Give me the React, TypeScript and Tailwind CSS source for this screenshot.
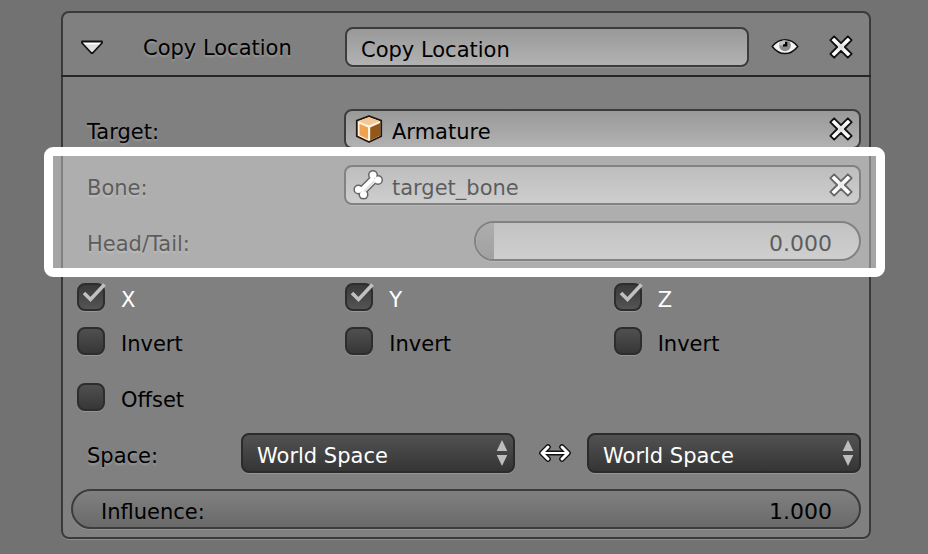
import { useId, useState, type ReactNode } from "react";

const engraved = "[text-shadow:0_2px_2px_rgb(255_255_255/0.2)]";

function CrossIcon() {
  return (
    <svg viewBox="0 0 24 24" className="size-6 overflow-visible" aria-hidden="true">
      <defs>
        <radialGradient id="cross-fill">
          <stop offset="0" stopColor="#dcdcdc" />
          <stop offset="0.6" stopColor="#ffffff" />
        </radialGradient>
      </defs>
      <path
        transform="rotate(45 12 12)"
        d="M9.300 -0.400H14.700V9.300H24.400V14.700H14.700V24.400H9.300V14.700H-0.400V9.300H9.300Z"
        fill="url(#cross-fill)"
        stroke="#101010"
        strokeWidth="1.800"
        strokeLinejoin="round"
      />
    </svg>
  );
}

function TriangleIcon() {
  return (
    <svg viewBox="0 0 24 16" className="h-4 w-6" aria-hidden="true">
      <defs>
        <linearGradient id="tri-fill" x1="0" y1="0" x2="0" y2="1">
          <stop offset="0.2" stopColor="#ffffff" />
          <stop offset="0.3" stopColor="#dcdcdc" />
          <stop offset="1" stopColor="#e8e8e8" />
        </linearGradient>
      </defs>
      <path d="M2 2.500H22V4L12.700 14H11.300L2 4Z" fill="url(#tri-fill)" stroke="#101010" strokeWidth="1.800" strokeLinejoin="round" />
    </svg>
  );
}

function EyeIcon() {
  return (
    <svg viewBox="0 0 28 18" className="h-[18px] w-7" aria-hidden="true">
      <path d="M1.200 8.500C5 3.800 9 1.800 14 1.800S23 3.800 26.800 8.500C23 13.300 19 15.600 14 15.600S5 13.300 1.200 8.500Z" fill="#f4f4f4" stroke="#101010" strokeWidth="1.500" strokeLinejoin="round" />
      <path d="M8.200 7.500C8.200 4.500 10 2.600 14 2.600S19.800 4.500 19.800 7.500A5.800 5.800 0 0 1 8.200 7.500Z" fill="#8c8c8c" />
      <path d="M8.200 7.500C8.200 4.500 10 2.600 14 2.600V7.500Z" fill="#c4c4c4" />
      <path d="M12 6.500L14 6V4H16.300V8.500H12Z" fill="#000" />
    </svg>
  );
}

function CubeIcon() {
  return (
    <svg viewBox="0 0 30 30" className="size-[30px]" aria-hidden="true">
      <path d="M15 2.200L27.200 6.600V22.300L15 28L2.800 22.300V6.600Z" fill="#fff3e2" stroke="#24170a" strokeWidth="1.800" strokeLinejoin="round" />
      <path d="M15 3.200L26 7.200L15 11.500L4 7.200Z" fill="#f5c795" />
      <path d="M5.500 9.700L14 13.400V25.300L5.500 21.300Z" fill="#efa350" />
      <path d="M16.200 13.400L26.200 9V21.600L16.200 26.400Z" fill="#94571a" />
    </svg>
  );
}

function BoneIcon() {
  return (
    <svg viewBox="1 0 30 30" className="size-[30px] overflow-visible" aria-hidden="true">
      <g fill="#101010" stroke="#101010">
        <path d="M9.500 20.500L20.500 9.500" strokeWidth="9.500" />
        <g stroke="none">
          <circle cx="20" cy="5" r="5" />
          <circle cx="25" cy="10" r="5" />
          <circle cx="5.400" cy="19.500" r="5" />
          <circle cx="10.500" cy="24.600" r="5" />
        </g>
      </g>
      <g fill="#fff" stroke="#fff">
        <path d="M8.500 21.500L21.500 8.500" strokeWidth="6.500" />
        <g stroke="none">
          <circle cx="20" cy="5" r="3.500" />
          <circle cx="25" cy="10" r="3.500" />
          <circle cx="5.400" cy="19.500" r="3.500" />
          <circle cx="10.500" cy="24.600" r="3.500" />
        </g>
      </g>
      <path d="M11 21.500L21.500 11" stroke="#d0d0d0" strokeWidth="2" />
    </svg>
  );
}

function SwapIcon() {
  const heads = "M9 4L3 10L9 16M23 4L29 10L23 16";
  return (
    <svg viewBox="0 0 32 20" className="h-5 w-8" fill="none" strokeLinecap="round" strokeLinejoin="round" aria-hidden="true">
      <path d={heads} stroke="#101010" strokeWidth="5.600" />
      <path d="M4 10H28" stroke="#101010" strokeWidth="4.800" />
      <path d={heads} stroke="#fff" strokeWidth="3" />
      <path d="M4 10H28" stroke="#fff" strokeWidth="2" />
    </svg>
  );
}

function Row({ label, htmlFor, children }: { label: string; htmlFor: string; children: ReactNode }) {
  return (
    <div className="grid h-10 grid-cols-[257px_1fr] pl-4">
      <label htmlFor={htmlFor} className={`pt-1.5 leading-[34px] ${engraved}`}>
        {label}
      </label>
      {children}
    </div>
  );
}

function DataField({ id, icon, initial, clearLabel }: { id: string; icon: ReactNode; initial: string; clearLabel: string }) {
  const [value, setValue] = useState(initial);
  return (
    <div className="flex h-10 min-w-0 items-center rounded-lg border-2 border-[#3c3c3c] bg-linear-to-b from-[#999999] to-[#b2b2b2] pr-1.5 pl-2 shadow-[0_1px_0_#909090]">
      {icon}
      <input
        id={id}
        value={value}
        onChange={(e) => setValue(e.target.value)}
        className="h-full min-w-0 flex-1 bg-transparent pt-1.5 pl-2 outline-none"
      />
      <button type="button" aria-label={clearLabel} onClick={() => setValue("")}>
        <CrossIcon />
      </button>
    </div>
  );
}

function Check({ label, initial = false }: { label: string; initial?: boolean }) {
  const id = useId();
  const [checked, setChecked] = useState(initial);
  return (
    <div className="flex h-10 items-center">
      <span className="relative size-7">
        <input
          id={id}
          type="checkbox"
          checked={checked}
          onChange={(e) => setChecked(e.target.checked)}
          className="peer block size-7 appearance-none rounded-lg border-2 border-[#2d2d2d] bg-linear-to-b from-[#505050] to-[#373737] shadow-[0_1px_0_#959595] checked:from-[#3a3a3a] checked:to-[#545454]"
        />
        <svg viewBox="0 0 30 28" className="pointer-events-none absolute top-0 left-0 hidden h-7 w-[30px] peer-checked:block" aria-hidden="true">
          <path d="M7 10L13.500 16.500L27.500 1.500" fill="none" stroke="#c0c0c0" strokeWidth="3.600" />
        </svg>
      </span>
      <label htmlFor={id} className={checked ? "pt-1.5 pl-4 leading-[34px] text-white" : "pt-1.5 pl-4 leading-[34px]"}>
        {label}
      </label>
    </div>
  );
}

function SpaceSelect({ label }: { label: string }) {
  return (
    <div className="relative min-w-0 flex-1">
      <select
        aria-label={label}
        className="block h-10 w-full appearance-none rounded-lg border-2 border-[#2b2b2b] bg-linear-to-b from-[#525252] to-[#353535] pt-1.5 pl-3.5 text-white shadow-[0_1px_0_#959595]"
      >
        <option>World Space</option>
        <option>Local Space</option>
      </select>
      <svg viewBox="0 0 12 26" className="pointer-events-none absolute top-[7px] right-[7px] h-[26px] w-3" fill="#bdbdbd" aria-hidden="true">
        <path d="M6 0L11.300 11H0.700ZM6 26L11.300 15H0.700Z" />
      </svg>
    </div>
  );
}

export default function App() {
  return (
    <main className="min-h-screen bg-[#727272] pt-[11px] pr-[57px] pb-[15px] pl-[61px] font-['DejaVu_Sans',sans-serif] text-[21px] text-black">
      <section className="rounded-lg border-2 border-[#3a3a3a] bg-[#808080] shadow-[0_1px_0_#8c8c8c]">
        <header className="-mx-[2px] flex items-center border-b-2 border-[#262626] pt-3.5 pr-[18px] pb-2 pl-[19px]">
          <button type="button" aria-label="Collapse panel">
            <TriangleIcon />
          </button>
          <label htmlFor="name" className={`w-[241px] pt-0.5 pl-[39px] leading-[38px] ${engraved}`}>
            Copy Location
          </label>
          <input
            id="name"
            defaultValue="Copy Location"
            className="h-10 min-w-0 flex-1 rounded-lg border-2 border-[#3c3c3c] bg-linear-to-b from-[#999999] to-[#b2b2b2] pt-1.5 pl-3.5 shadow-[0_1px_0_#909090] outline-none"
          />
          <button type="button" aria-label="Toggle visibility" className="mr-[30px] ml-[22px]">
            <EyeIcon />
          </button>
          <button type="button" aria-label="Remove constraint">
            <CrossIcon />
          </button>
        </header>

        <div className="flex flex-col gap-4 px-2 pt-8 pb-2">
          <Row label="Target:" htmlFor="target">
            <DataField id="target" icon={<CubeIcon />} initial="Armature" clearLabel="Clear target" />
          </Row>

          <div className="relative flex flex-col gap-4">
            <Row label="Bone:" htmlFor="bone">
              <DataField id="bone" icon={<BoneIcon />} initial="target_bone" clearLabel="Clear bone" />
            </Row>
            <Row label="Head/Tail:" htmlFor="head-tail">
              <div className="ml-[130px] flex h-10 overflow-hidden rounded-full border-2 border-[#3c3c3c] bg-linear-to-b from-[#a0a0a0] to-[#b4b4b4] shadow-[0_1px_0_#909090]">
                <span className="w-[18px] bg-linear-to-b from-[#808080] to-[#6c6c6c]" />
                <input
                  id="head-tail"
                  inputMode="decimal"
                  defaultValue="0.000"
                  className="min-w-0 flex-1 bg-transparent pt-1 pr-[27px] text-right text-[22px] outline-none"
                />
              </div>
            </Row>
            <div
              aria-hidden="true"
              className="pointer-events-none absolute -top-[18px] -right-6 -bottom-4 -left-[27px] rounded-[9px] border-[9px] border-white bg-white/36 bg-clip-padding"
            />
          </div>

          <div className="grid grid-cols-3 gap-x-[21px] gap-y-1 pl-1.5">
            <Check label="X" initial />
            <Check label="Y" initial />
            <Check label="Z" initial />
            <Check label="Invert" />
            <Check label="Invert" />
            <Check label="Invert" />
          </div>

          <div className="pl-1.5">
            <Check label="Offset" />
          </div>

          <div className="flex h-10 items-center pl-4">
            <span className={`w-[154px] pt-1.5 leading-[34px] ${engraved}`}>Space:</span>
            <SpaceSelect label="Owner space" />
            <button type="button" aria-label="Swap spaces" className="mr-4 ml-6">
              <SwapIcon />
            </button>
            <SpaceSelect label="Target space" />
          </div>

          <div className="flex h-10 rounded-full border-2 border-[#3c3c3c] bg-linear-to-b from-[#808080] to-[#6a6a6a] pr-[27px] pl-7 shadow-[0_1px_0_#909090]">
            <label htmlFor="influence" className="pt-1 leading-[34px]">
              Influence:
            </label>
            <input
              id="influence"
              inputMode="decimal"
              defaultValue="1.000"
              className="min-w-0 flex-1 bg-transparent pt-1 text-right text-[22px] outline-none"
            />
          </div>
        </div>
      </section>
    </main>
  );
}
